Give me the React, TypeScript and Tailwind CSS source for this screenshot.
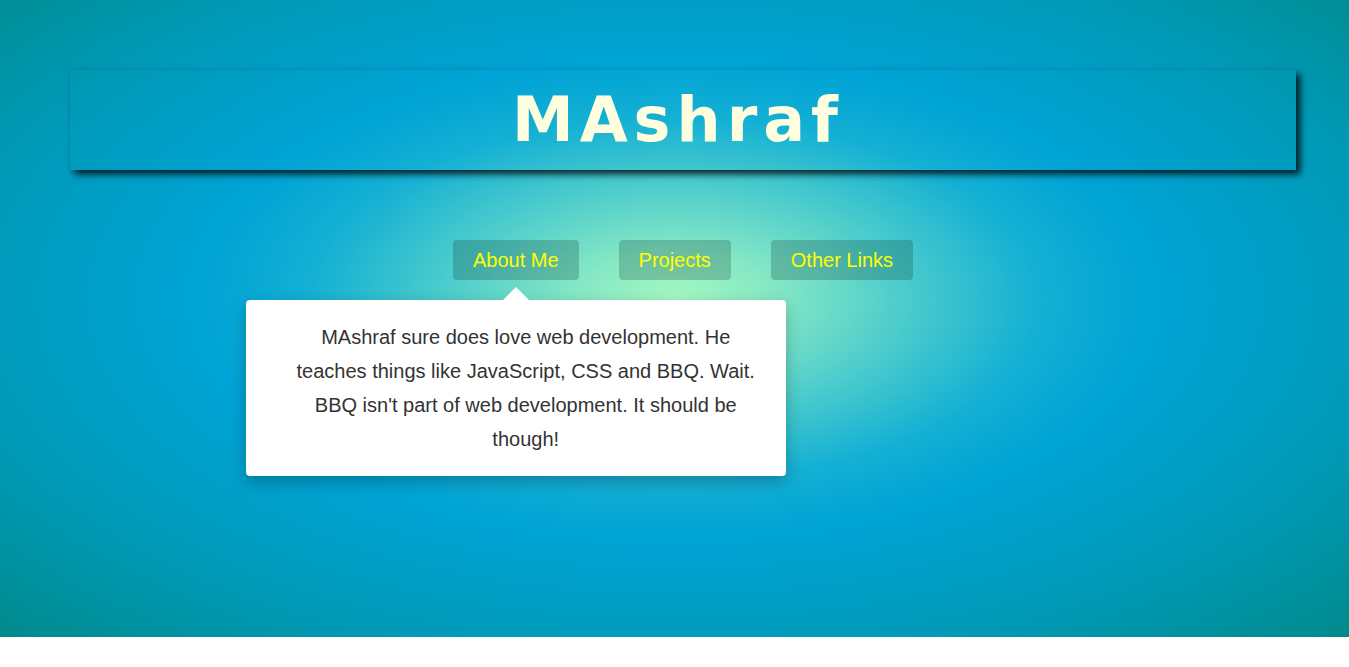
export default function App() {
  return (
    <div className="min-h-screen bg-white">
      <main className="relative h-[637px] overflow-hidden bg-[radial-gradient(ellipse_at_50%_47%,#a4f8c0_0%,#86e8c4_10%,#4ccccc_24%,#14b0d4_38%,#00a3d5_50%,#009ab8_75%,#008a8c_100%)] px-[70px] pt-[70px] font-['Liberation_Sans',Arial,sans-serif]">
        {/* Header */}
        <header className="flex h-[100px] w-[1226px] items-center justify-center shadow-[4px_4px_7px_rgba(0,0,0,0.85)]">
          <h1 className="pr-[10px] font-['DejaVu_Sans',sans-serif] text-[62px] leading-none font-bold tracking-[6px] text-[#ffffe0]">
            MAshraf
          </h1>
        </header>

        {/* Nav */}
        <nav className="mt-[70px] flex justify-center gap-10 pl-[17px]">
          <div className="relative">
            <button className="flex h-10 items-center rounded bg-[rgba(0,40,30,0.22)] px-5 text-[20px] text-[#ffff00]">
              About Me
            </button>
            {/* Popup */}
            <div className="absolute top-[60px] left-1/2 z-10 w-[540px] -translate-x-1/2 rounded bg-white py-5 pr-[25px] pl-[45px] text-center text-[20px] leading-[34px] text-[#333] shadow-[0_6px_16px_rgba(0,0,0,0.25)]">
              <span className="absolute -top-[13px] left-1/2 h-0 w-0 -translate-x-1/2 border-x-[13px] border-b-[13px] border-x-transparent border-b-white" />
              MAshraf sure does love web development. He teaches things like JavaScript, CSS and BBQ. Wait. BBQ isn't part of web development. It should be though!
            </div>
          </div>
          <button className="flex h-10 items-center rounded bg-[rgba(0,40,30,0.22)] px-5 text-[20px] text-[#ffff00]">
            Projects
          </button>
          <button className="flex h-10 items-center rounded bg-[rgba(0,40,30,0.22)] px-5 text-[20px] text-[#ffff00]">
            Other Links
          </button>
        </nav>
      </main>
    </div>
  )
}
